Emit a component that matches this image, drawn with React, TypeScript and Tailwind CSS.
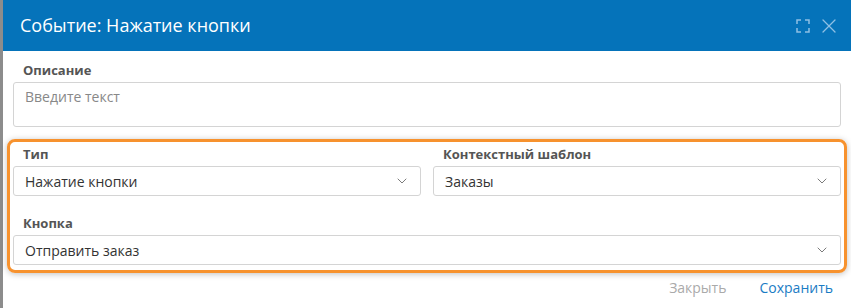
import { ChevronDown, X } from 'lucide-react';

function Select({ value }: { value: string }) {
    return (
        <div className="flex h-[30px] items-center justify-between rounded-[3px] border border-[#d4d4d4] bg-white pl-[11px] pr-[10px] text-[14px] text-[#333]">
            <span>{value}</span>
            <ChevronDown className="h-4 w-4 text-[#666]" strokeWidth={1.3} />
        </div>
    );
}

function Label({ children }: { children: React.ReactNode }) {
    return <div className="mb-[3px] pl-[10px] text-[13px] font-bold leading-[18px] text-[#555]">{children}</div>;
}

export default function App() {
    return (
        <div className="flex h-[308px] w-[851px] bg-[#8c8c8c] font-['Open_Sans',sans-serif]">
            <div className="ml-[3px] flex flex-1 flex-col bg-white">
                {/* Header */}
                <div className="flex h-[51px] items-center justify-between bg-[#0573ba] pl-[17px] pr-[10px]">
                    <div className="text-[18px] text-white">Событие: Нажатие кнопки</div>
                    <div className="flex items-center gap-[6px] text-[#8fc0e4]">
                        <svg width="16" height="16" viewBox="0 0 16 16" fill="none" stroke="currentColor" strokeWidth="1.5">
                            <path d="M2 6V2h4M10 2h4v4M14 10v4h-4M6 14H2v-4" />
                        </svg>
                        <X className="h-[24px] w-[24px]" strokeWidth={1.3} />
                    </div>
                </div>

                {/* Body */}
                <div className="flex flex-col px-[10px] pt-[10px]">
                    <Label>Описание</Label>
                    <div className="h-[45px] rounded-[3px] border border-[#d4d4d4] px-[11px] pt-[3px] text-[14px] text-[#888]">
                        Введите текст
                    </div>

                    <div className="-mx-[6px] mt-[12px] rounded-[8px] border-[3px] border-[#f7922e] px-[3px] pb-[5px] pt-[3px] shadow-[0_1px_6px_rgba(0,0,0,0.25)]">
                        <div className="grid grid-cols-2 gap-[12px]">
                            <div>
                                <Label>Тип</Label>
                                <Select value="Нажатие кнопки" />
                            </div>
                            <div>
                                <Label>Контекстный шаблон</Label>
                                <Select value="Заказы" />
                            </div>
                        </div>
                        <div className="mt-[18px]">
                            <Label>Кнопка</Label>
                            <Select value="Отправить заказ" />
                        </div>
                    </div>

                    <div className="mt-[4px] flex justify-end gap-[33px] pr-[8px] text-[14px]">
                        <span className="text-[#aaa]">Закрыть</span>
                        <span className="text-[#1a7cc4]">Сохранить</span>
                    </div>
                </div>
            </div>
        </div>
    );
}
